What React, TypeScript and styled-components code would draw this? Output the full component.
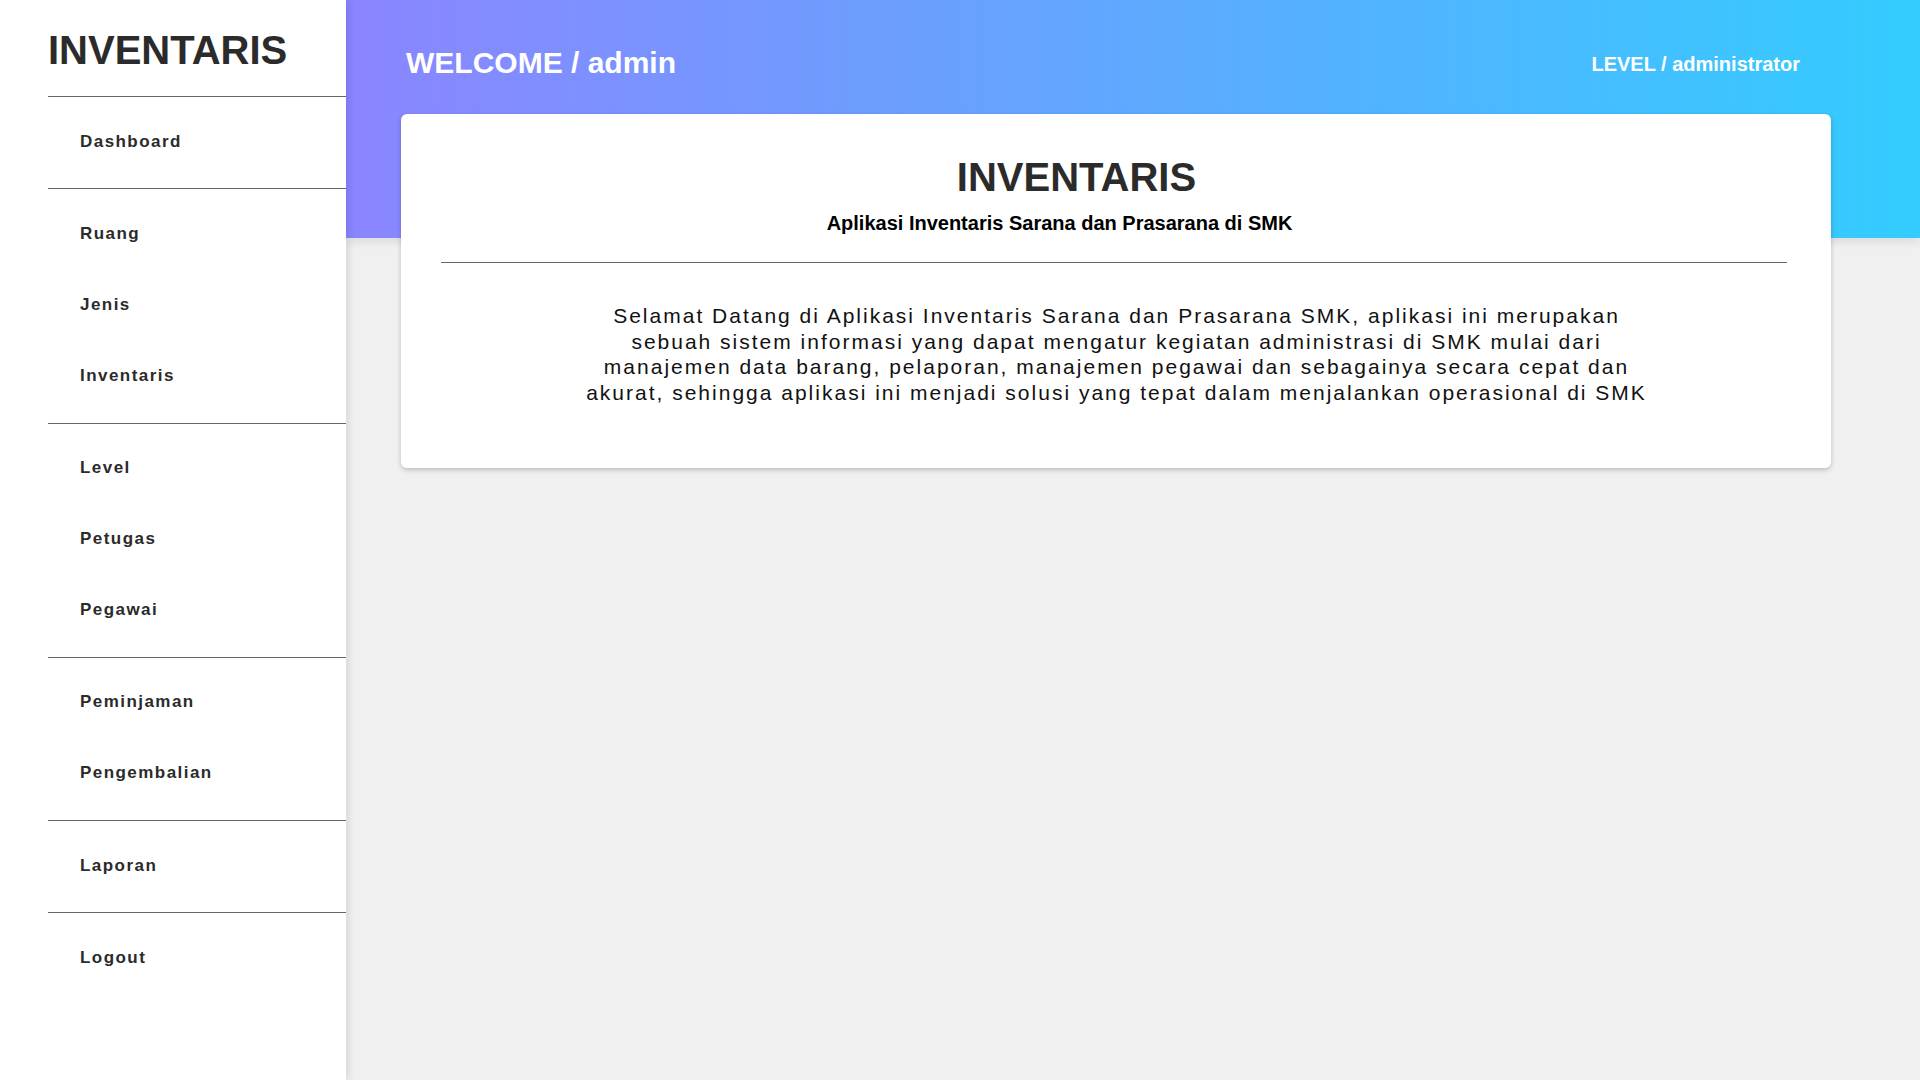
import React from "react";
import styled, { createGlobalStyle } from "styled-components";

const GlobalStyle = createGlobalStyle`
  html, body {
    margin: 0;
    padding: 0;
  }
  body {
    font-family: "Liberation Sans", Arial, Helvetica, sans-serif;
    background: #f0f0f0;
    color: #2b2b2b;
  }
  * { box-sizing: border-box; }
`;

const Layout = styled.div`
  display: flex;
  min-height: 100vh;
`;

const Sidebar = styled.aside`
  width: 346px;
  flex-shrink: 0;
  background: #ffffff;
  padding-left: 48px;
  position: relative;
  z-index: 2;
  box-shadow: 2px 0 8px rgba(0, 0, 0, 0.12);
`;

const Brand = styled.div`
  padding-top: 28px;
  margin-bottom: 23px;
  font-size: 40px;
  line-height: 45px;
  font-weight: 700;
  color: #2b2b2b;
`;

const Rule = styled.div`
  height: 1px;
  background: #666666;
`;

const MenuGroup = styled.ul`
  list-style: none;
  margin: 0;
  padding: 9px 0 11.25px;
`;

const MenuItem = styled.li`
  height: 71px;
  display: flex;
  align-items: center;
  padding-left: 32px;
`;

const MenuLink = styled.a`
  font-size: 17px;
  font-weight: 700;
  letter-spacing: 1.45px;
  color: #2b2b2b;
  text-decoration: none;
  cursor: pointer;
`;

const Main = styled.main`
  flex: 1;
  display: flex;
  flex-direction: column;
  min-width: 0;
`;

const Header = styled.header`
  height: 238px;
  flex-shrink: 0;
  background: linear-gradient(90deg, #8b85ff 0%, #33ccff 100%);
  box-shadow: 0 3px 10px rgba(0, 0, 0, 0.1);
  display: flex;
  justify-content: space-between;
  align-items: flex-start;
  padding: 46px 120px 0 60px;
`;

const Welcome = styled.h1`
  margin: 0;
  font-size: 30px;
  line-height: 34px;
  font-weight: 700;
  color: #ffffff;
`;

const LevelText = styled.div`
  margin-top: 1px;
  font-size: 20px;
  line-height: 34px;
  font-weight: 700;
  color: #ffffff;
`;

const Card = styled.section`
  position: relative;
  margin: -124px 89px 0 55px;
  background: #ffffff;
  border-radius: 6px;
  box-shadow: 0 2px 5px rgba(0, 0, 0, 0.22);
  padding: 41px 44px 62px 40px;
`;

const Title = styled.h2<{ $shift: number }>`
  margin: 0;
  text-align: center;
  font-size: 40px;
  line-height: 45px;
  font-weight: 700;
  color: #2b2b2b;
  padding-right: ${(p) => p.$shift}px;
`;

const Subtitle = styled.h3<{ $shift: number }>`
  margin: 12px 0 0;
  text-align: center;
  font-size: 20px;
  line-height: 23px;
  font-weight: 700;
  color: #000000;
  padding-right: ${(p) => p.$shift}px;
`;

const CardRule = styled.div`
  margin-top: 27px;
  height: 1px;
  background: #666666;
`;

const Intro = styled.p`
  width: 1076px;
  margin: 40px auto 0;
  padding-left: 5px;
  text-align: center;
  font-size: 21px;
  line-height: 25.7px;
  letter-spacing: 2px;
  color: #111111;
`;

const groups: string[][] = [
  ["Dashboard"],
  ["Ruang", "Jenis", "Inventaris"],
  ["Level", "Petugas", "Pegawai"],
  ["Peminjaman", "Pengembalian"],
  ["Laporan"],
  ["Logout"],
];

export default function App() {
  return (
    <>
      <GlobalStyle />
      <Layout>
        <Sidebar>
          <Brand>INVENTARIS</Brand>
          {groups.map((group, i) => (
            <React.Fragment key={i}>
              <Rule />
              <MenuGroup>
                {group.map((label) => (
                  <MenuItem key={label}>
                    <MenuLink>{label}</MenuLink>
                  </MenuItem>
                ))}
              </MenuGroup>
            </React.Fragment>
          ))}
        </Sidebar>
        <Main>
          <Header>
            <Welcome>WELCOME / admin</Welcome>
            <LevelText>LEVEL / administrator</LevelText>
          </Header>
          <Card>
            <Title $shift={75}>INVENTARIS</Title>
            <Subtitle $shift={109}>Aplikasi Inventaris Sarana dan Prasarana di SMK</Subtitle>
            <CardRule />
            <Intro>
              Selamat Datang di Aplikasi Inventaris Sarana dan Prasarana SMK, aplikasi ini
              merupakan sebuah sistem informasi yang dapat mengatur kegiatan administrasi di SMK
              mulai dari manajemen data barang, pelaporan, manajemen pegawai dan sebagainya secara
              cepat dan akurat, sehingga aplikasi ini menjadi solusi yang tepat dalam menjalankan
              operasional di SMK
            </Intro>
          </Card>
        </Main>
      </Layout>
    </>
  );
}
